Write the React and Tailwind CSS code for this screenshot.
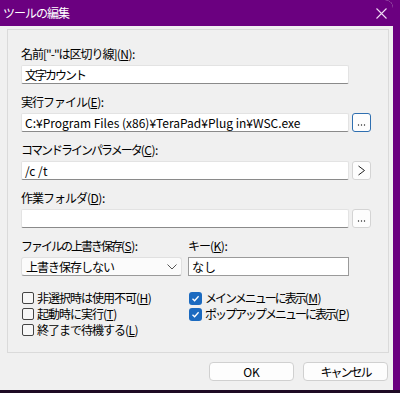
import React from 'react';

function Label({ text, k, tight }) {
  return (
    <div className="h-[16px] leading-[16px] text-[12px] text-black whitespace-nowrap">
      <span className={tight ? 'tracking-[-2px]' : 'tracking-[-1px]'}>{text}</span>
      <span className="tracking-[-0.5px]">
        (<u>{k}</u>):
      </span>
    </div>
  );
}

function TextBox({ value, className = '' }) {
  return (
    <div
      className={`h-[19px] bg-white border border-[#e3e3e3] border-b-[#8a8a8a] rounded-[2px] px-[3px] text-[12px] leading-[17px] text-black whitespace-nowrap overflow-hidden ${className}`}
    >
      {value}
    </div>
  );
}

function SmallButton({ children, focused }) {
  return (
    <div
      className={`w-[19px] h-[19px] flex items-center justify-center rounded-[3px] bg-[#fdfdfd] text-black ${
        focused ? 'border border-[#2f6fb0]' : 'border border-[#d4d4d4]'
      }`}
    >
      {children}
    </div>
  );
}

function Field({ label, k, value, button, focused, tight }) {
  return (
    <div className="flex flex-col">
      <Label text={label} k={k} tight={tight} />
      <div className="flex items-center gap-[3px] mt-[3px]">
        <TextBox value={value} className="w-[328px]" />
        <SmallButton focused={focused}>{button}</SmallButton>
      </div>
    </div>
  );
}

function Check({ checked, text, k, tight }) {
  return (
    <div className="h-[16px] flex items-center gap-[3px] text-[12px] leading-[16px] text-black whitespace-nowrap">
      {checked ? (
        <div className="w-[13px] h-[13px] rounded-[3px] bg-[#1b6ac0] flex items-center justify-center">
          <svg width="9" height="9" viewBox="0 0 9 9">
            <polyline points="1.5,4.8 3.6,6.8 7.6,2.2" fill="none" stroke="white" strokeWidth="1.3" />
          </svg>
        </div>
      ) : (
        <div className="w-[12px] h-[12px] rounded-[2px] border border-[#444] bg-[#f7f7f7]" />
      )}
      <span>
        <span className={tight ? 'tracking-[-2px]' : 'tracking-[-1px]'}>{text}</span>
        <span className="tracking-[-0.5px]">
          (<u>{k}</u>)
        </span>
      </span>
    </div>
  );
}

function Dots() {
  return (
    <svg width="9" height="9" viewBox="0 0 9 9">
      <circle cx="1.5" cy="7" r="0.7" fill="#222" />
      <circle cx="4.5" cy="7" r="0.7" fill="#222" />
      <circle cx="7.5" cy="7" r="0.7" fill="#222" />
    </svg>
  );
}

function Arrow() {
  return (
    <svg width="9" height="11" viewBox="0 0 9 11">
      <polyline points="1.5,1 7.5,5.5 1.5,10" fill="none" stroke="#222" strokeWidth="1" />
    </svg>
  );
}

export default function App() {
  return (
    <div className="w-[400px] h-[393px] bg-[#6b0080] flex flex-col overflow-hidden font-['Noto_Sans_CJK_JP','Noto_Sans',sans-serif]">
      <div className="flex h-[390px]">
        <div className="w-[393px] h-full flex flex-col bg-[#f0f0f0] rounded-tr-[8px] overflow-hidden">
          <div className="h-[26px] bg-[#6b0080] flex items-center justify-between pl-[3px] pr-[6px]">
            <span className="text-white text-[12px] tracking-[-1px]">ツールの編集</span>
            <svg width="11" height="11" viewBox="0 0 11 11">
              <path d="M0.5 0.5 L10.5 10.5 M10.5 0.5 L0.5 10.5" stroke="#f0dcf4" strokeWidth="1.1" />
            </svg>
          </div>
          <div className="flex-1 flex flex-col pl-[7px] pr-[4px] pt-[3px]">
            <div className="h-[324px] border border-[#dadada] pt-[16px] pl-[13px] flex flex-col">
              <div className="flex flex-col gap-[10px]">
                <div className="flex flex-col">
                  <Label text={'名前["-"は区切り線]'} k="N" />
                  <TextBox
                    value={<span className="tracking-[-2px]">文字カウント</span>}
                    className="w-[328px] mt-[3px]"
                  />
                </div>
                <Field
                  label="実行ファイル"
                  k="E"
                  value="C:¥Program Files (x86)¥TeraPad¥Plug in¥WSC.exe"
                  button={<Dots />}
                  focused
                />
                <Field label="コマンドラインパラメータ" k="C" value="/c /t" button={<Arrow />} tight />
                <Field label="作業フォルダ" k="D" value="" button={<Dots />} />
                <div className="grid grid-cols-[161px_161px] gap-x-[6px]">
                  <div className="flex flex-col">
                    <Label text="ファイルの上書き保存" k="S" tight />
                    <div className="mt-[3px] h-[19px] bg-[#fbfbfb] border border-[#e0e0e0] border-b-[#9a9a9a] rounded-[3px] flex items-center justify-between pl-[4px] pr-[4px] text-[12px] text-black">
                      <span className="tracking-[-1px]">上書き保存しない</span>
                      <svg width="10" height="6" viewBox="0 0 10 6">
                        <polyline points="0.5,0.5 5,5 9.5,0.5" fill="none" stroke="#555" strokeWidth="1" />
                      </svg>
                    </div>
                  </div>
                  <div className="flex flex-col">
                    <Label text="キー" k="K" />
                    <div className="mt-[3px] h-[19px] bg-white border border-[#9a9a9a] px-[3px] text-[12px] leading-[17px] text-black">
                      なし
                    </div>
                  </div>
                </div>
              </div>
              <div className="grid grid-cols-[167px_161px] mt-[14px] pl-[1px]">
                <div className="flex flex-col">
                  <Check text="非選択時は使用不可" k="H" />
                  <Check text="起動時に実行" k="T" />
                  <Check text="終了まで待機する" k="L" />
                </div>
                <div className="flex flex-col">
                  <Check checked text="メインメニューに表示" k="M" tight />
                  <Check checked text="ポップアップメニューに表示" k="P" tight />
                </div>
              </div>
            </div>
            <div className="flex justify-end gap-[9px] mt-[9px] pr-[1px]">
              <div className="w-[85px] h-[19px] rounded-[4px] border border-[#d0d0d0] bg-[#fdfdfd] flex items-center justify-center text-[12px] text-black">
                OK
              </div>
              <div className="w-[85px] h-[19px] rounded-[4px] border border-[#d0d0d0] bg-[#fdfdfd] flex items-center justify-center text-[12px] text-black tracking-[-2px]">
                キャンセル
              </div>
            </div>
          </div>
        </div>
      </div>
      <div className="h-[3px] bg-[#1e0b24]" />
    </div>
  );
}
